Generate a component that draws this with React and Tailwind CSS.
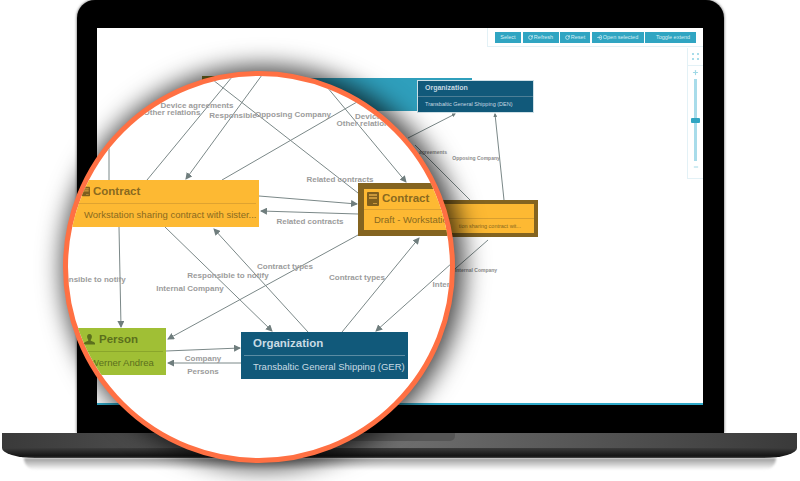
import { RotateCw, LogIn, Plus, Minus } from "lucide-react";

// Page coordinates, the svg viewBoxes below line up with them
const lensEdges = [
  { d: "M147 180 L232 77" },
  { d: "M262 75 L186 179", arrow: true },
  { d: "M222 180 L395 80" },
  { d: "M213 80 L358 193" },
  { d: "M327 87 L406 182", arrow: true },
  { d: "M109 147 L109 180" },
  { d: "M259 196 L357 204", arrow: true },
  { d: "M358 214 L261 211", arrow: true },
  { d: "M165 227 L272 331", arrow: true },
  { d: "M308 332 L214 229", arrow: true },
  { d: "M119 227 L121 327", arrow: true },
  { d: "M358 235 L168 339", arrow: true },
  { d: "M342 332 L419 238", arrow: true },
  { d: "M452 263 L376 331", arrow: true },
  { d: "M166 351 L240 348", arrow: true },
  { d: "M241 363 L168 363", arrow: true },
];

const lensLabels = [
  ["Device agreements", 197, 108],
  ["Other relations", 172, 115],
  ["Responsible", 233, 118],
  ["Opposing Company", 293, 117],
  ["Device", 368, 119],
  ["Other relations", 365, 126],
  ["Related contracts", 340, 182],
  ["Related contracts", 310, 224],
  ["Responsible to notify", 85, 282],
  ["Contract types", 285, 269],
  ["Responsible to notify", 228, 278],
  ["Internal Company", 190, 291],
  ["Contract types", 357, 280],
  ["Company", 203, 361],
  ["Persons", 203, 374],
  ["Internal", 447, 287],
];

const backEdges = [
  { d: "M408 138 L455 114", arrow: true },
  { d: "M504 200 L495 114", arrow: true },
  { d: "M415 145 L470 200" },
  { d: "M488 240 L440 282" },
];

const backLabels = [
  ["agreements", 433, 154],
  ["Opposing Company", 476, 160],
  ["Internal Company", 476, 272],
];

const toolbarButtons = [
  { label: "Select", width: "w-[26px]" },
  { label: "Refresh", width: "w-[36px]", icon: RotateCw },
  { label: "Reset", width: "w-[30px]", icon: RotateCw },
  { label: "Open selected", width: "w-[52px]", icon: LogIn },
  { label: "Toggle extend", width: "w-[51px] pl-[5px]" },
];

function EdgeLayer({ id, edges, labels, viewBox, className, labelClass, arrowSize }) {
  return (
    <svg viewBox={viewBox} className={className}>
      <defs>
        <marker id={id} markerUnits="userSpaceOnUse" markerWidth={arrowSize} markerHeight={arrowSize} refX={arrowSize - 1} refY={arrowSize / 2} orient="auto">
          <path d={`M0 0 L${arrowSize} ${arrowSize / 2} L0 ${arrowSize} Z`} fill="#6f7d7d" />
        </marker>
      </defs>
      {edges.map((edge) => (
        <path key={edge.d} d={edge.d} fill="none" stroke="#7b8888" strokeWidth="1" markerEnd={edge.arrow ? `url(#${id})` : undefined} />
      ))}
      {labels.map(([text, x, y]) => (
        <text key={text + x} x={x} y={y} textAnchor="middle" className={labelClass}>
          {text}
        </text>
      ))}
    </svg>
  );
}

function ContractIcon({ className }) {
  return (
    <svg viewBox="0 0 12 14" className={className}>
      <rect width="12" height="14" rx="1" fill="#7f5f1e" />
      <rect x="2" y="2" width="8" height="2" fill="#c9973a" />
      <rect x="2" y="5" width="8" height="2" fill="#c9973a" />
      <rect x="6" y="11" width="4" height="1" fill="#c9973a" />
    </svg>
  );
}

function PersonIcon({ className }) {
  return (
    <svg viewBox="0 0 12 12" className={className}>
      <path d="M6 0 C8 0 8.8 1.6 8.6 3.4 C8.5 4.6 8 5.6 7.4 6.3 L7.4 7.4 C9 8 11.4 8.6 12 10 L12 11.5 L0 11.5 L0 10 C0.6 8.6 3 8 4.6 7.4 L4.6 6.3 C4 5.6 3.5 4.6 3.4 3.4 C3.2 1.6 4 0 6 0 Z" fill="#5b6f1d" />
    </svg>
  );
}

function ToolbarButton({ label, width, icon: Icon }) {
  return (
    <div className={`flex h-[11px] items-center justify-center gap-[1px] bg-[#30a5c2] text-[5.5px] text-[#d7eef4] ${width}`}>
      {Icon && <Icon className="h-[5px] w-[5px]" strokeWidth={3.5} />}
      <span className="whitespace-nowrap">{label}</span>
    </div>
  );
}

function Toolbar() {
  return (
    <div className="absolute right-0 top-0 flex h-[19px] w-[216px] items-start gap-[1.5px] border-b border-l border-[#e3f1f6] pl-[7px] pt-[4px]">
      {toolbarButtons.map((button) => (
        <ToolbarButton key={button.label} {...button} />
      ))}
    </div>
  );
}

function ZoomControl() {
  return (
    <div className="absolute right-0 top-[20px] flex h-[131px] w-[16px] flex-col items-center border-b border-l border-[#e3f1f6] text-[#9fd8e6]">
      <div className="flex h-[18px] w-full items-center justify-center border-b border-[#e3f1f6]">
        <div className="grid grid-cols-2 gap-[3px]">
          <span className="h-[2px] w-[2px] bg-[#a8dcea]" />
          <span className="h-[2px] w-[2px] bg-[#a8dcea]" />
          <span className="h-[2px] w-[2px] bg-[#a8dcea]" />
          <span className="h-[2px] w-[2px] bg-[#a8dcea]" />
        </div>
      </div>
      <Plus className="mt-[3px] h-[7px] w-[7px]" strokeWidth={4} />
      <div className="relative mt-[3px] h-[82px] w-[3px] bg-[#a8dcea]">
        <div className="absolute left-[-3px] top-[39px] h-[5px] w-[9px] rounded-[1px] bg-[#30a5c2]" />
      </div>
      <Minus className="mt-[3px] h-[6px] w-[6px]" strokeWidth={4} />
    </div>
  );
}

// Diagram as seen on the laptop screen, mostly hidden by the lens
function ScreenDiagram() {
  return (
    <div className="relative h-full w-full overflow-hidden border-b-2 border-[#30a9c9] bg-white">
      <EdgeLayer
        id="back-arrow"
        edges={backEdges}
        labels={backLabels}
        viewBox="97 28 606 377"
        className="absolute left-0 top-0 h-[377px] w-[606px]"
        labelClass="fill-[#8d8d8d] text-[5px] font-bold"
        arrowSize={4}
      />
      <div className="absolute left-[105px] top-[48px] h-[20px] w-[20px] bg-[#7f7a25]" />
      <div className="absolute left-[110px] top-[50px] flex h-[33px] w-[196px] flex-col bg-[#2f9fbc] pl-[265px] text-[6px] font-bold text-[#185a72]">
        <span className="mt-[5px]">ation</span>
      </div>
      <div className="absolute left-[320px] top-[52px] flex h-[33px] w-[117px] flex-col border border-[#cfe0e6] bg-[#11597a] text-[#c5d8e1]">
        <div className="flex h-[16px] items-center border-b border-[#4d7f96] pl-[7px] text-[7px] font-bold">Organization</div>
        <div className="flex flex-1 items-center pl-[7px] text-[5.5px]">Transbaltic General Shipping (DEN)</div>
      </div>
      <div className="absolute left-[300px] top-[172px] flex h-[37px] w-[141px] flex-col justify-end border-[4px] border-[#846420] bg-[#fdb933] text-right text-[5.5px] text-[#8a6a20]">
        <div className="flex h-[15px] items-center justify-end border-t border-[#d99f30] pr-[13px]">tion sharing contract wit...</div>
      </div>
      <Toolbar />
      <ZoomControl />
    </div>
  );
}

function ContractNode({ name, selected, className }) {
  return (
    <div className={`absolute flex flex-col bg-[#fdb933] text-[#8a6a20] ${className}`}>
      <div className={`flex items-center border-b border-[#dfa330] font-bold ${selected ? "h-[21px] gap-[3px] pl-[3px] text-[11.5px]" : "mx-[3px] h-[24px] gap-[3px] pl-[11px] text-[11.5px]"}`}>
        <ContractIcon className={selected ? "h-[14px] w-[12px]" : "h-[13px] w-[8px]"} />
        <span>Contract</span>
      </div>
      <div className={`flex flex-1 items-center whitespace-nowrap text-[9.5px] ${selected ? "pl-[10px]" : "pl-[16px]"}`}>{name}</div>
    </div>
  );
}

function Lens() {
  return (
    <div className="absolute left-[63px] top-[71px] h-[392px] w-[392px] rounded-full border-[5px] border-[#ff7043] bg-white shadow-[4px_0_24px_5px_rgba(0,0,0,0.72)]">
      <div className="relative h-full w-full overflow-hidden rounded-full">
        <EdgeLayer
          id="lens-arrow"
          edges={lensEdges}
          labels={lensLabels}
          viewBox="68 76 382 382"
          className="absolute left-0 top-0 h-[382px] w-[382px]"
          labelClass="fill-[#9c9c9c] text-[8px] font-bold"
          arrowSize={7}
        />
        <ContractNode name="Workstation sharing contract with sister..." className="left-0 top-[104px] h-[47px] w-[191px]" />
        <ContractNode name="Draft - Workstation sharing contract wit..." selected className="left-[290px] top-[107px] h-[53px] w-[180px] border-[6px] border-[#846420]" />

        <div className="absolute left-0 top-[252px] flex h-[47px] w-[98px] flex-col bg-[#a0bf35] text-[#5b6f1d]">
          <div className="mr-[3px] flex h-[24px] items-center gap-[4px] border-b border-[#8aa62b] pl-[16px] text-[11.5px] font-bold">
            <PersonIcon className="h-[11px] w-[11px]" />
            <span>Person</span>
          </div>
          <div className="flex flex-1 items-center pl-[22px] text-[9.5px]">Werner Andrea</div>
        </div>

        <div className="absolute left-[173px] top-[256px] flex h-[47px] w-[167px] flex-col bg-[#11597a] text-[#c9dbe4]">
          <div className="mx-[3px] flex h-[24px] items-center border-b border-[#5b8ca3] pl-[9px] text-[11.5px] font-bold">Organization</div>
          <div className="flex flex-1 items-center pl-[12px] text-[9.5px]">Transbaltic General Shipping (GER)</div>
        </div>
      </div>
    </div>
  );
}

function LaptopBase() {
  return (
    <div className="relative ml-[2px] w-[795px]">
      <div className="h-[15px] bg-gradient-to-r from-[#3a3a3a] via-[#6e6e6e] to-[#3a3a3a]" />
      <div className="h-[10px] rounded-b-[40px_12px] bg-gradient-to-b from-[#3c3c3c] to-[#0c0c0c]" />
      <div className="absolute left-[343px] top-0 h-[8px] w-[110px] rounded-b-[5px] bg-[#565656]" />
    </div>
  );
}

export default function App() {
  return (
    <div className="relative h-[481px] w-[800px] overflow-hidden bg-white font-['Liberation_Sans',Arial,sans-serif]">
      <div className="ml-[77px] h-[433px] w-[647px] rounded-t-[18px] bg-black pb-[28px] pl-[20px] pr-[21px] pt-[28px] shadow-[0_0_3px_rgba(0,0,0,0.7)]">
        <ScreenDiagram />
      </div>
      <LaptopBase />
      <div className="mx-[24px] h-[12px] rounded-b-[30px] bg-gradient-to-b from-[#9a9a9a] to-white blur-[1px]" />
      <Lens />
    </div>
  );
}
